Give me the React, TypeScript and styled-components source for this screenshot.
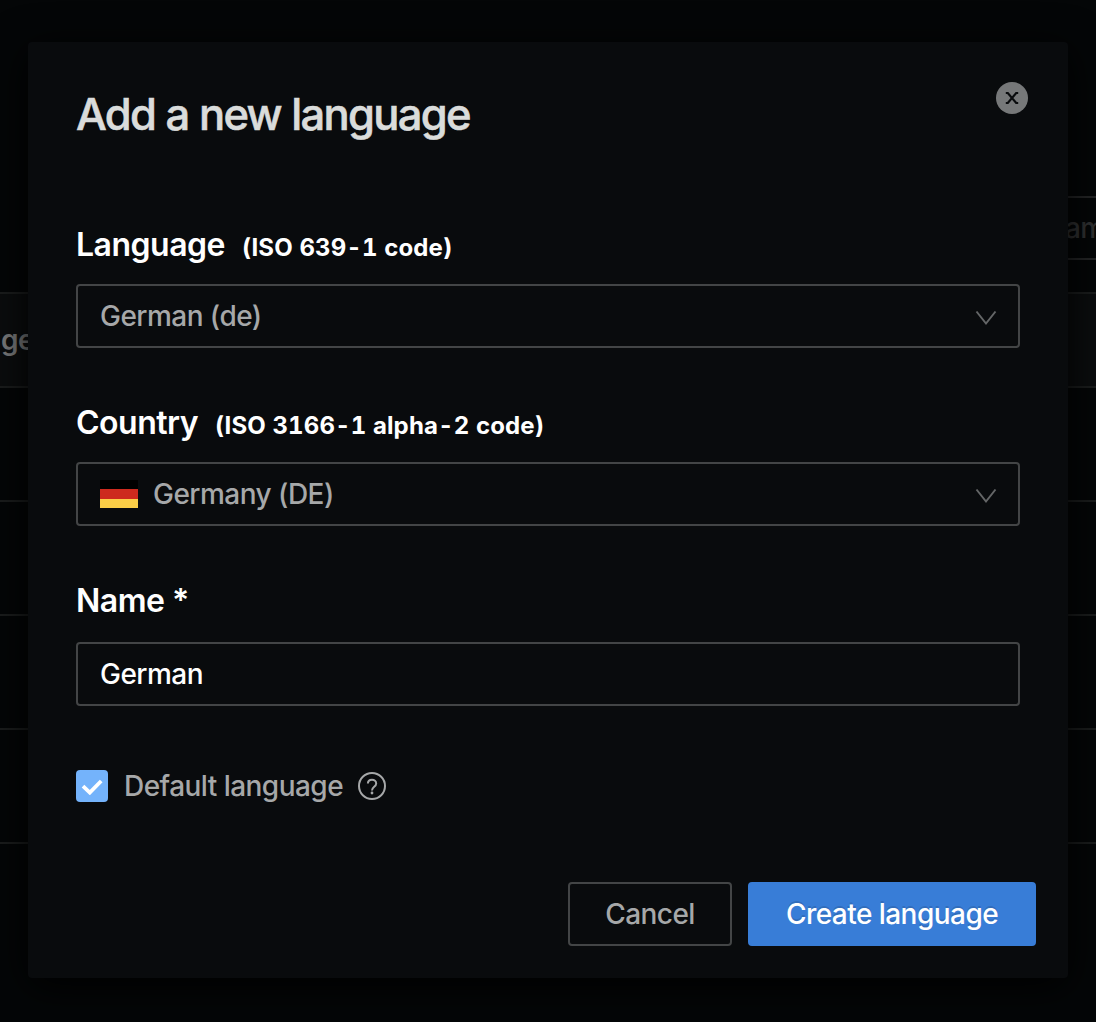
import React, { useState } from 'react';
import styled, { createGlobalStyle } from 'styled-components';

const GlobalStyle = createGlobalStyle`
  *, *::before, *::after { box-sizing: border-box; }
  body {
    margin: 0;
    background: #040607;
    font-family: Inter, "Liberation Sans", sans-serif;
    font-size: 28px;
    font-weight: 450;
    letter-spacing: -0.54px;
  }
  button, input { font: inherit; letter-spacing: inherit; }
`;

const Page = styled.div`
  position: relative;
  height: 1022px;
  overflow: hidden;
`;

const Backdrop = styled.div`
  display: flex;
  flex-direction: column;
  padding-top: 196px;
`;

const SearchBox = styled.div`
  display: flex;
  align-items: center;
  align-self: flex-end;
  width: 72px;
  height: 64px;
  margin-bottom: 32px;
  padding-left: 41px;
  border: solid #242526;
  border-width: 2px 0;
  color: #303132;
`;

const TableHead = styled.div`
  display: flex;
  align-items: center;
  height: 96px;
  padding-left: 1px;
  border: solid #1b1d1d;
  border-width: 2px 0;
  background: #0b0d0e;
  color: #7c7d7e;
  font-weight: 600;
  letter-spacing: -0.4px;
`;

const TableRow = styled.div`
  height: 114px;
  border-bottom: 2px solid #1b1d1d;
`;

const Dialog = styled.form`
  position: absolute;
  inset: 42px 28px 44px;
  display: flex;
  flex-direction: column;
  padding: 40px 48px 32px;
  border-radius: 4px;
  background: #090b0d;
  box-shadow: 0 8px 40px #000;
`;

const Header = styled.header`
  display: flex;
  align-items: flex-start;
  justify-content: space-between;
  height: 144px;
  margin-right: -8px;
`;

const Title = styled.h1`
  margin: 5px 0 0;
  color: #dadcdb;
  font-size: 43.5px;
  font-weight: 500;
  line-height: 54px;
  letter-spacing: -1.7px;
  word-spacing: 0.5px;
  -webkit-text-stroke: 0.6px #dadcdb;
`;

const CloseButton = styled.button`
  display: grid;
  place-items: center;
  width: 32px;
  height: 32px;
  padding: 0;
  border: 0;
  border-radius: 50%;
  background: #767879;
  color: #090b0d;
`;

const Field = styled.div<{ $height: number }>`
  height: ${({ $height }) => $height}px;
`;

const Label = styled.label<{ $height: number }>`
  display: flex;
  align-items: baseline;
  height: ${({ $height }) => $height}px;
  color: #fff;
  font-size: 32px;
  font-weight: 560;
  line-height: 38px;
  letter-spacing: -0.5px;
  white-space: pre;
`;

const Hint = styled.span`
  margin-left: 17px;
  font-size: 24px;
  font-weight: 720;
  font-variant-numeric: tabular-nums;
  letter-spacing: 0.13px;
`;

const Select = styled.div`
  display: flex;
  align-items: center;
  height: 64px;
  padding: 0 21px 0 22px;
  border: 2px solid #434546;
  border-radius: 4px;
  color: #a6a8a9;
`;

const SelectText = styled.span`
  flex: 1;
`;

const Flag = styled.svg`
  width: 38px;
  height: 28px;
  margin-right: 15px;
`;

const TextInput = styled.input`
  display: block;
  width: 100%;
  height: 64px;
  padding: 0 22px;
  border: 2px solid #434546;
  border-radius: 4px;
  outline: 0;
  background: transparent;
  color: #fff;
`;

const CheckRow = styled.div`
  display: flex;
  align-items: center;
  height: 32px;
  color: #a6a8a9;
`;

const CheckBox = styled.button`
  display: grid;
  place-items: center;
  width: 32px;
  height: 32px;
  margin-right: 16px;
  padding: 0;
  border: 0;
  border-radius: 4px;
  background: #74b3fb;
`;

const CheckText = styled.span`
  width: 219px;
  white-space: nowrap;
`;

const HelpIcon = styled.svg`
  margin-left: 15px;
`;

const Footer = styled.footer`
  display: flex;
  justify-content: flex-end;
  gap: 16px;
  margin: auto -16px 0 0;
`;

const Button = styled.button<{ $primary?: boolean; $width: number }>`
  width: ${({ $width }) => $width}px;
  height: 64px;
  padding: 0;
  border: 2px solid ${({ $primary }) => ($primary ? '#387dd7' : '#434546')};
  border-radius: 4px;
  background: ${({ $primary }) => ($primary ? '#387dd7' : 'transparent')};
  color: ${({ $primary }) => ($primary ? '#fff' : '#a6a8a9')};
  text-shadow: ${({ $primary }) => ($primary ? '0 -2px 0 rgba(0, 0, 0, 0.12)' : 'none')};
`;

const ChevronIcon = styled.svg`
  position: relative;
  top: 2px;
`;

const Chevron = () => (
  <ChevronIcon width="22" height="16" viewBox="0 0 22 16" fill="none" stroke="#646667" strokeWidth="2">
    <path d="M1.5 1.5 11 13.5 20.5 1.5" />
  </ChevronIcon>
);

export default function App() {
  const [name, setName] = useState('German');
  const [isDefault, setIsDefault] = useState(true);

  return (
    <Page>
      <GlobalStyle />
      <Backdrop>
        <SearchBox>am</SearchBox>
        <TableHead>ge</TableHead>
        <TableRow />
        <TableRow />
        <TableRow />
        <TableRow />
      </Backdrop>
      <Dialog onSubmit={(e) => e.preventDefault()}>
        <Header>
          <Title>Add a new language</Title>
          <CloseButton type="button" aria-label="Close">
            <svg width="14" height="14" viewBox="0 0 14 14" fill="none" stroke="currentColor" strokeWidth="2.2">
              <path d="M.8 2H2.8L11.2 12H13.2M13.2 2H11.2L2.8 12H.8" />
            </svg>
          </CloseButton>
        </Header>
        <Field $height={178}>
          <Label $height={58}>Language<Hint>(ISO 639-1 code)</Hint></Label>
          <Select><SelectText>German (de)</SelectText><Chevron /></Select>
        </Field>
        <Field $height={178}>
          <Label $height={58}>Country<Hint>(ISO 3166-1 alpha-2 code)</Hint></Label>
          <Select>
            <Flag viewBox="0 0 38 28" preserveAspectRatio="none">
              <path fill="#000" d="M0 0h38v9H0z" />
              <path fill="#cd2a1e" d="M0 9h38v10H0z" />
              <path fill="#fbce47" d="M0 19h38v9H0z" />
            </Flag>
            <SelectText>Germany (DE)</SelectText>
            <Chevron />
          </Select>
        </Field>
        <Field $height={188}>
          <Label $height={60} htmlFor="name">Name *</Label>
          <TextInput id="name" value={name} onChange={(e) => setName(e.target.value)} />
        </Field>
        <CheckRow>
          <CheckBox type="button" role="checkbox" aria-checked={isDefault} aria-label="Default language" onClick={() => setIsDefault(!isDefault)}>
            {isDefault && (
              <svg width="22" height="18" viewBox="0 0 22 18" fill="none" stroke="#fff" strokeWidth="3.8">
                <path d="M2 9.2 8.8 15.6 20.2 4" />
              </svg>
            )}
          </CheckBox>
          <CheckText>Default language</CheckText>
          <HelpIcon width="28" height="28" viewBox="0 0 28 28" fill="none" stroke="#a6a8a9" strokeWidth="2">
            <circle cx="14" cy="14" r="13" />
            <path d="M9.9 11.6C9.9 9.2 11.7 7.7 14 7.7s4.2 1.5 4.2 3.8c0 3.2-4.2 3.4-4.2 6.9" />
            <circle cx="14" cy="21" r="1.4" fill="#a6a8a9" stroke="none" />
          </HelpIcon>
        </CheckRow>
        <Footer>
          <Button type="button" $width={164}>Cancel</Button>
          <Button type="submit" $primary $width={288}>Create language</Button>
        </Footer>
      </Dialog>
    </Page>
  );
}
